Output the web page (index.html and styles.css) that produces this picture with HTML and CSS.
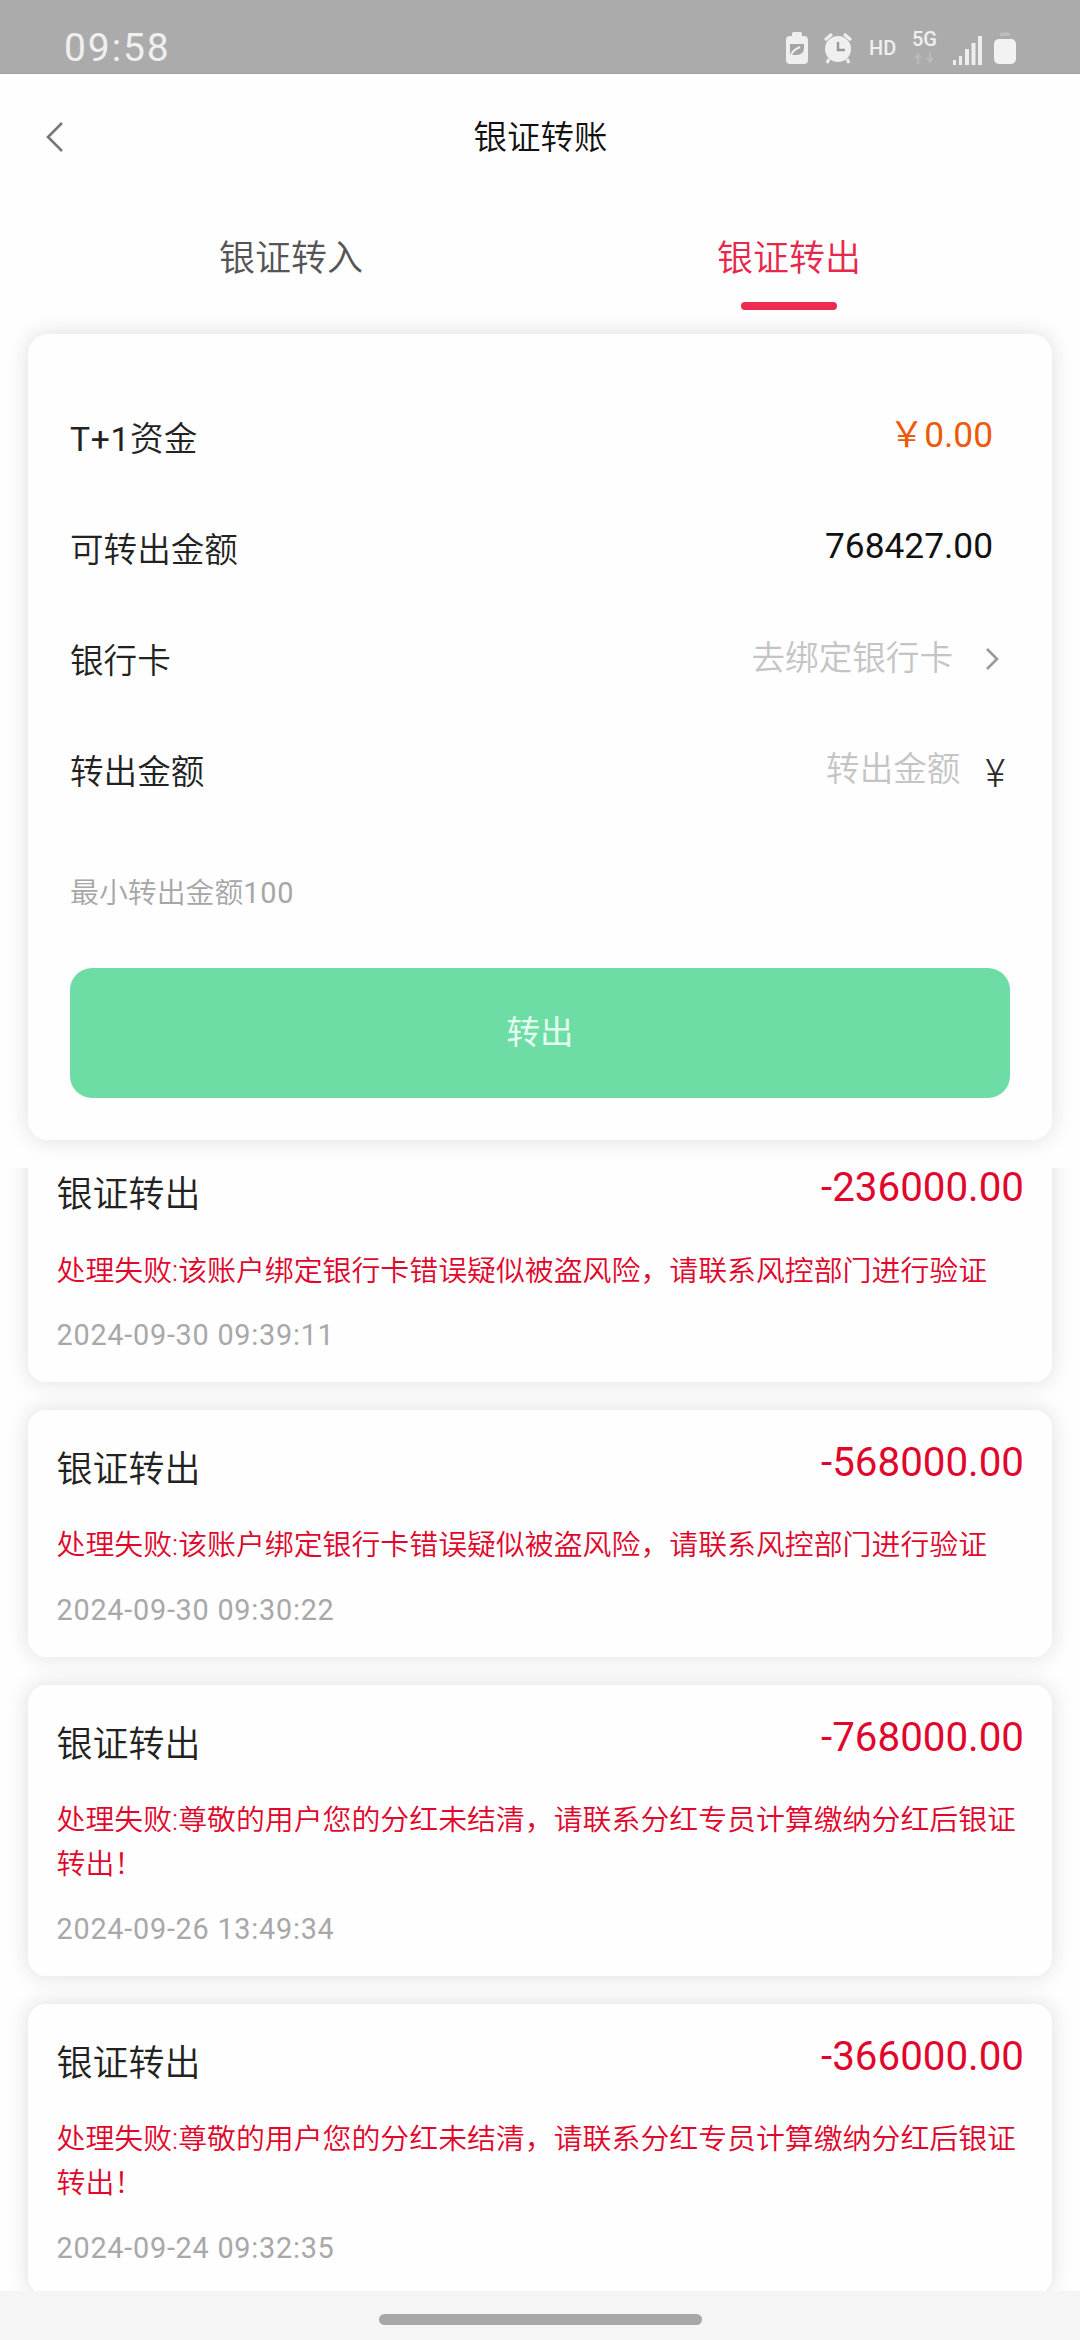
FILE: index.html
```html
<!DOCTYPE html>
<html lang="zh-CN">
<head>
<meta charset="utf-8">
<title>银证转账</title>
<link rel="stylesheet" href="styles.css">
</head>
<body>
<div class="screen">
  <div class="status">
    <span class="clock">09:58</span>
    <div class="status-icons">
      <svg class="ic-saver" width="26" height="34" viewBox="0 0 26 34"><path d="M8 5V2.500q0-1.500 1.500-1.500h7q1.500 0 1.500 1.500V5h2q4 0 4 4v20q0 4-4 4H6q-4 0-4-4V9q0-4 4-4z" fill="#efefef"/><path d="M6 13h14v4q0 7-8 7H6z" fill="#a5a5a5"/><path d="M7 24q2-5 9-8" stroke="#efefef" stroke-width="2" fill="none"/></svg>
      <svg class="ic-alarm" width="30" height="34" viewBox="0 0 30 34"><circle cx="15" cy="18" r="13" fill="#efefef"/><path d="M2 9l7-6M28 9l-7-6M6 28l-2 4M24 28l2 4" stroke="#efefef" stroke-width="3"/><path d="M15 11v8h7" stroke="#999" stroke-width="2.500" fill="none"/></svg>
      <span class="hd">HD</span>
      <div class="net"><span>5G</span>
        <svg width="22" height="14" viewBox="0 0 22 14"><path d="M5 1l4 6H6v6H4V7H1zM17 13l-4-6h3V1h2v6h3z" fill="#b9b9b9"/></svg></div>
      <svg class="ic-signal" width="30" height="32" viewBox="0 0 30 32"><path d="M1 26h3v5H1zM7 22h3v9H7zM13 15h4v16h-4zM19.500 9h4v22h-4zM26 2h4v29h-4z" fill="#eee"/></svg>
      <svg class="ic-battery" width="24" height="34" viewBox="0 0 24 34"><path d="M7 5V3q0-1.500 1.500-1.500h7Q17 1.500 17 3v2z" fill="#bdbdbd"/><rect x="1" y="8" width="22" height="25" rx="5" fill="#f2f2f2"/></svg>
    </div>
  </div>
  <header class="header">
    <svg class="back" width="20" height="34" viewBox="0 0 20 34"><path d="M17 3L3 17l14 14" fill="none" stroke="#777" stroke-width="2.600"/></svg>
    <h1 class="title">银证转账</h1>
  </header>
  <nav class="tabs">
    <div class="tab">银证转入</div>
    <div class="tab tab-active">银证转出</div>
  </nav>
  <section class="form">
    <div class="row"><span class="label"><span class="latin">T+1</span>资金</span><span class="value orange">￥0.00</span></div>
    <div class="row"><span class="label">可转出金额</span><span class="value">768427.00</span></div>
    <div class="row"><span class="label">银行卡</span><span class="hint">去绑定银行卡</span><svg class="more" width="14" height="24" viewBox="0 0 14 24"><path d="M2 2l10 10L2 22" fill="none" stroke="#999" stroke-width="2.600"/></svg></div>
    <div class="row"><span class="label">转出金额</span><span class="hint">转出金额</span><span class="unit">¥</span></div>
    <p class="note">最小转出金额<span class="latin">100</span></p>
    <div class="submit">转出</div>
  </section>
  <main class="list">
    <article class="record record-cut">
      <div class="head"><span class="name">银证转出</span><span class="amount">-236000.00</span></div>
      <p class="error">处理失败:该账户绑定银行卡错误疑似被盗风险，请联系风控部门进行验证</p>
      <time class="date">2024-09-30 09:39:11</time>
    </article>
    <article class="record">
      <div class="head"><span class="name">银证转出</span><span class="amount">-568000.00</span></div>
      <p class="error">处理失败:该账户绑定银行卡错误疑似被盗风险，请联系风控部门进行验证</p>
      <time class="date">2024-09-30 09:30:22</time>
    </article>
    <article class="record">
      <div class="head"><span class="name">银证转出</span><span class="amount">-768000.00</span></div>
      <p class="error">处理失败:尊敬的用户您的分红未结清，请联系分红专员计算缴纳分红后银证转出！</p>
      <time class="date">2024-09-26 13:49:34</time>
    </article>
    <article class="record">
      <div class="head"><span class="name">银证转出</span><span class="amount">-366000.00</span></div>
      <p class="error">处理失败:尊敬的用户您的分红未结清，请联系分红专员计算缴纳分红后银证转出！</p>
      <time class="date">2024-09-24 09:32:35</time>
    </article>
  </main>
  <footer class="homebar"><div class="pill"></div></footer>
</div>
</body>
</html>
```

FILE: styles.css
```css
* { box-sizing: border-box; margin: 0; padding: 0; }
body {
  background: #fefefe;
  color: #2b2b2b;
  font-family: Roboto, "Noto Sans CJK SC", sans-serif;
  overflow: hidden;
}
.screen { width: 1080px; height: 2340px; display: flex; flex-direction: column; overflow: hidden; }

.status {
  flex: none;
  height: 74px;
  padding: 23px 63px 0 64px;
  display: flex;
  justify-content: space-between;
  background: #ababab;
  border-bottom: 1px solid #a0a0a0;
  color: #efefef;
}
.clock { font-size: 39px; line-height: 50px; letter-spacing: 1.9px; }
.status-icons { display: flex; padding-top: 8px; }
.status-icons svg { flex: none; }
.ic-alarm { margin-left: 13px; }
.hd { width: 28px; margin-left: 16px; font-size: 20px; line-height: 34px; font-weight: 500; }
.net { width: 28px; margin-left: 15px; display: flex; flex-direction: column; font-size: 20px; line-height: 17px; font-weight: 500; }
.net svg { margin: 3px 0 0 1px; }
.ic-signal { margin-left: 12px; margin-top: 3px; }
.ic-battery { margin-left: 11px; }

.header { flex: none; height: 128px; padding-left: 45px; display: flex; align-items: center; }
.back { margin-bottom: 3px; }
.title { flex: 1; margin-right: 64px; text-align: center; font-size: 33.5px; font-weight: 350; line-height: 50px; color: #111; }

.tabs { flex: none; height: 132px; padding: 0 42px; display: flex; }
.tab { flex: 1; display: flex; flex-direction: column; align-items: center; padding-top: 32px; font-size: 36px; font-weight: 350; line-height: 50px; color: #555; }
.tab-active { color: #e8274b; }
.tab-active::after { content: ""; width: 96px; height: 8px; margin-top: 18px; border-radius: 4px; background: #ee2a50; }

.form {
  flex: none;
  height: 806px;
  margin: 0 28px;
  padding: 49px 42px 0;
  border-radius: 20px;
  background: #fefefe;
  box-shadow: 0 0 20px 2px rgba(40, 30, 50, .12);
}
.row { height: 111px; display: flex; align-items: center; font-size: 33.6px; line-height: 50px; }
.label { flex: 1; padding-top: 3px; font-weight: 350; color: #222; }
.latin { font-weight: 400; letter-spacing: .7px; }
.value { margin-right: 17px; margin-bottom: 7px; font-size: 35.3px; color: #111; }
.orange { color: #ee5a0c; }
.hint { color: #c4c4c4; margin-bottom: 4px; font-weight: 350; }
.more { margin: 0 11px 4px 32px; }
.unit { margin: 5px 5px 0 25px; font-size: 38px; font-weight: 300; }
.note { height: 60px; margin-top: 36px; font-size: 28.9px; font-weight: 350; line-height: 60px; color: #a6a6a6; }
.submit {
  height: 130px;
  margin-top: 45px;
  border-radius: 22px;
  background: #6edca5;
  color: #e4fff0;
  font-size: 33.5px;
  line-height: 130px;
  text-align: center;
}

.list { flex: 1; min-height: 0; margin-top: 28px; padding: 0 28px; display: flex; flex-direction: column; gap: 28px; overflow: hidden; }
.record {
  flex: none;
  padding: 31px 28px 24.700px 28.5px;
  border-radius: 18px;
  background: #fefefe;
  box-shadow: 0 0 20px 2px rgba(40, 30, 50, .12);
}
.record-cut { margin-top: -33px; }
.head { height: 56px; display: flex; justify-content: space-between; font-size: 36px; line-height: 58px; }
.name { font-weight: 350; color: #222; }
.amount { margin-top: 2px; font-size: 40.3px; line-height: 40px; color: #e0062c; }
.error { margin-top: 27.5px; font-size: 28.9px; font-weight: 350; line-height: 43.8px; color: #e0062c; }
.date { display: block; margin-top: 20px; font-size: 28.8px; line-height: 44px; letter-spacing: .76px; color: #a8a8a8; }

.homebar { flex: none; height: 49px; display: flex; justify-content: center; padding-top: 23px; background: #f6f5f6; }
.pill { width: 323px; height: 11px; border-radius: 6px; background: #a8a7a8; }
```
